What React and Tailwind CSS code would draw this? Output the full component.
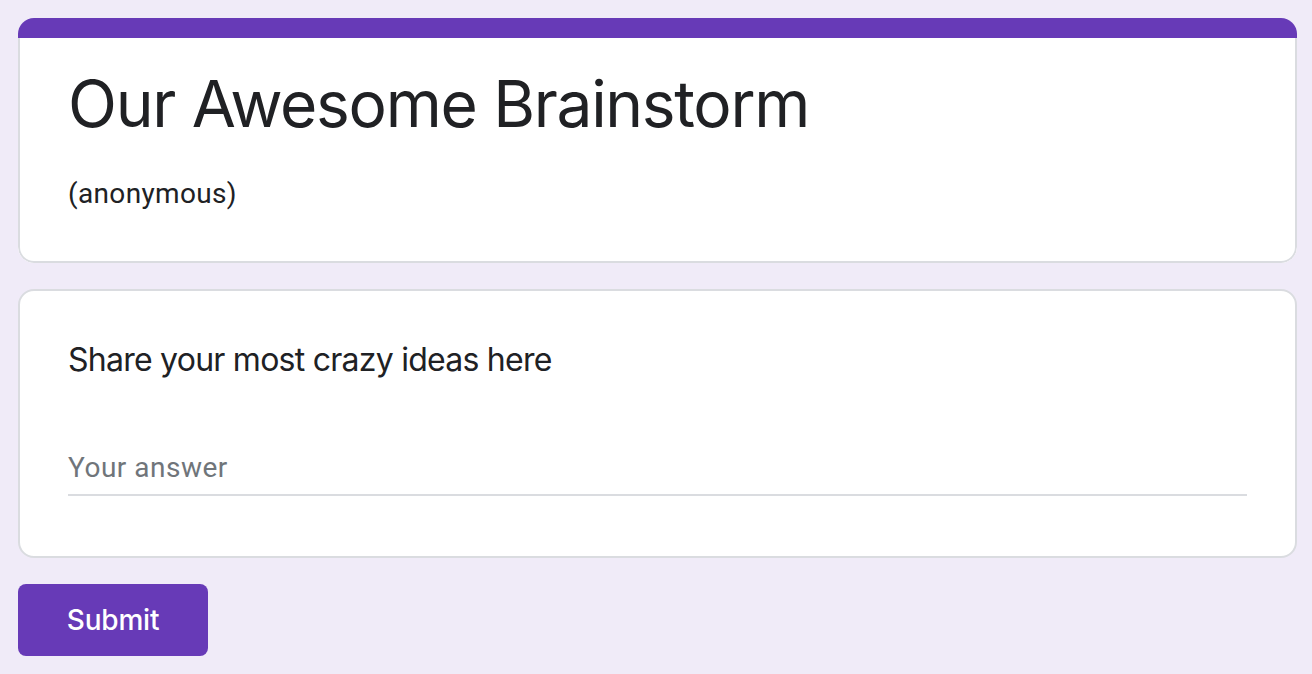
import React from "react";

export default function App() {
  return (
    <div className="min-h-screen bg-[#f0ebf8] pl-[18px] pr-[15px] pt-[18px] text-[#202124]">
      <section className="overflow-hidden rounded-[16px] bg-white">
        <div className="h-[20px] bg-[#673ab7]" />
        <div className="rounded-b-[16px] border-x-2 border-b-2 border-[#dadce0] px-[48px] pb-[47px] pt-[26px]">
          <h1 className="font-['Inter',sans-serif] text-[64px] font-normal leading-[80px] tracking-[-1.3px]">Our Awesome Brainstorm</h1>
          <p className="mt-[30px] font-['Roboto',sans-serif] text-[28px] leading-[40px] tracking-[0.35px]">(anonymous)</p>
        </div>
      </section>

      <section className="mt-[26px] rounded-[16px] border-2 border-[#dadce0] bg-white px-[48px] pb-[60px] pt-[45px]">
        <h2 className="font-['Inter',sans-serif] text-[32px] font-normal leading-[48px] tracking-[-0.75px]">Share your most crazy ideas here</h2>
        <div className="mt-[64px] border-b-2 border-[#dadce0] pb-[6px] font-['Roboto',sans-serif] text-[28px] leading-[40px] tracking-[0.5px] text-[#70757a]">
          Your answer
        </div>
      </section>

      <button className="mt-[26px] h-[72px] w-[190px] rounded-[8px] bg-[#673ab7] font-['Inter',sans-serif] text-[28px] font-medium tracking-[-0.2px] text-white">
        Submit
      </button>
    </div>
  );
}
